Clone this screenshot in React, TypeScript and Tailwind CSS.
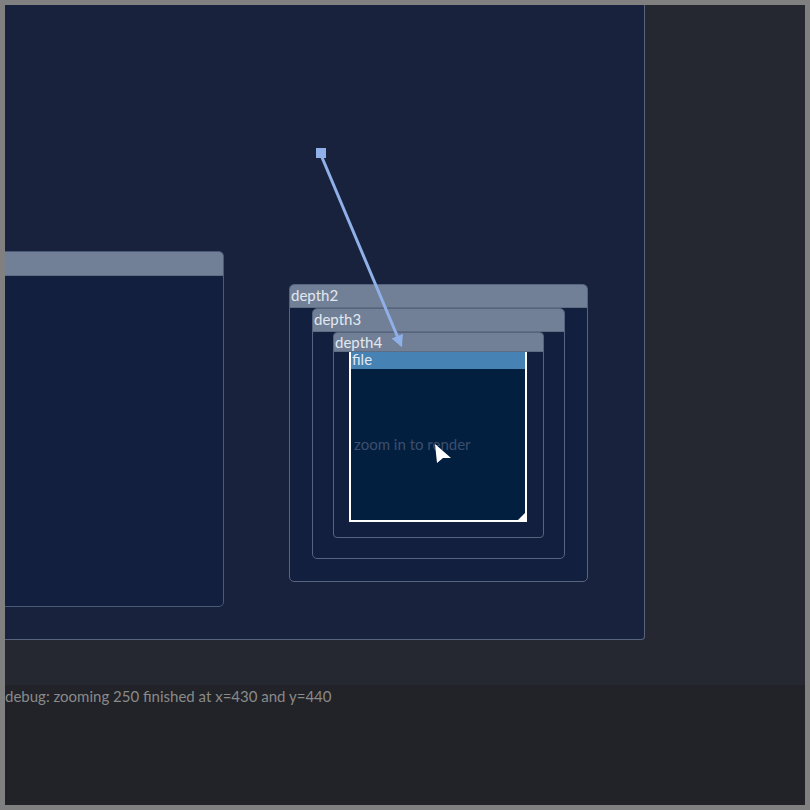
import React from 'react';

const font = { fontFamily: 'Lato, "Noto Sans", sans-serif' };

function Header({ label, h }: { label: string; h: string }) {
  return (
    <div className={`${h} shrink-0 bg-[#718096] border-b border-[#5f6d82] text-[#e2e8f0] text-[15px] leading-[19px] pl-[1px] overflow-hidden`}>
      {label}
    </div>
  );
}

export default function App() {
  return (
    <div className="w-[810px] h-[810px] bg-[#808080] p-[5px]" style={font}>
      <div className="flex flex-col w-full h-full">
        <div className="h-[680px] shrink-0 bg-[#252831]">
          <div className="relative w-[640px] h-[635px] overflow-hidden bg-[#18223c] border-r border-b border-[#56647f] rounded-br-[4px]">
            {/* left node, mostly out of view */}
            <div className="absolute left-[-30px] top-[246px] w-[249px] h-[356px] flex flex-col rounded-[5px] border border-[#4b5a78] bg-[#131f3e] overflow-hidden">
              <div className="h-[24px] shrink-0 bg-[#718096] border-b border-[#5f6d82]" />
            </div>

            {/* nested nodes */}
            <div className="absolute left-[284px] top-[279px] w-[299px] h-[298px] flex flex-col rounded-[5px] border border-[#56647f] bg-[#131f3e] overflow-hidden">
              <Header label="depth2" h="h-[23px] pt-[1px]" />
              <div className="flex-1 flex flex-col px-[22px] pb-[22px]">
                <div className="flex-1 flex flex-col rounded-[5px] border border-[#56647f] bg-[#131f3e] overflow-hidden">
                  <Header label="depth3" h="h-[23px] pt-[1px]" />
                  <div className="flex-1 flex flex-col px-[20px] pb-[20px]">
                    <div className="flex-1 flex flex-col rounded-[4px] border border-[#56647f] bg-[#131f3e] overflow-hidden">
                      <Header label="depth4" h="h-[19px]" />
                      <div className="flex-1 flex flex-col pl-[15px] pr-[16px] pb-[15px]">
                        <div className="relative flex-1 flex flex-col border-x-2 border-b-2 border-white bg-[#021f3f]">
                          <div className="h-[17px] shrink-0 bg-[#4682b4] text-[#e2e8f0] text-[15px] leading-[15px] pl-[1px]">file</div>
                          <div className="flex-1 flex items-center pl-[3px] text-[15px] text-[#3d4e6c]">zoom in to render</div>
                          <div className="absolute right-0 bottom-0 w-0 h-0 border-l-[7px] border-l-transparent border-b-[7px] border-b-white" />
                        </div>
                      </div>
                    </div>
                  </div>
                </div>
              </div>
            </div>

            {/* edge */}
            <svg className="absolute left-0 top-0 pointer-events-none" width="640" height="635">
              <defs>
                <marker id="ah" viewBox="0 0 10 10" refX="8" refY="5" markerWidth="4" markerHeight="4" orient="auto">
                  <path d="M0,0 L10,5 L0,10 z" fill="#8fb0e8" />
                </marker>
              </defs>
              <rect x="311" y="143" width="10" height="10" fill="#8fb0e8" />
              <line x1="316" y1="150" x2="396" y2="340" stroke="#8fb0e8" strokeWidth="3" markerEnd="url(#ah)" />
            </svg>

            {/* cursor */}
            <svg className="absolute left-[429px] top-[439px]" width="20" height="20" viewBox="0 0 20 20">
              <path d="M1,0 L17,14 L9,14 L3,19 Z" fill="#ffffff" />
            </svg>
          </div>
        </div>
        <div className="flex-1 bg-[#212328] text-[#8a8a8a] text-[15px] leading-[20px] pt-[1px]">
          debug: zooming 250 finished at x=430 and y=440
        </div>
      </div>
    </div>
  );
}
